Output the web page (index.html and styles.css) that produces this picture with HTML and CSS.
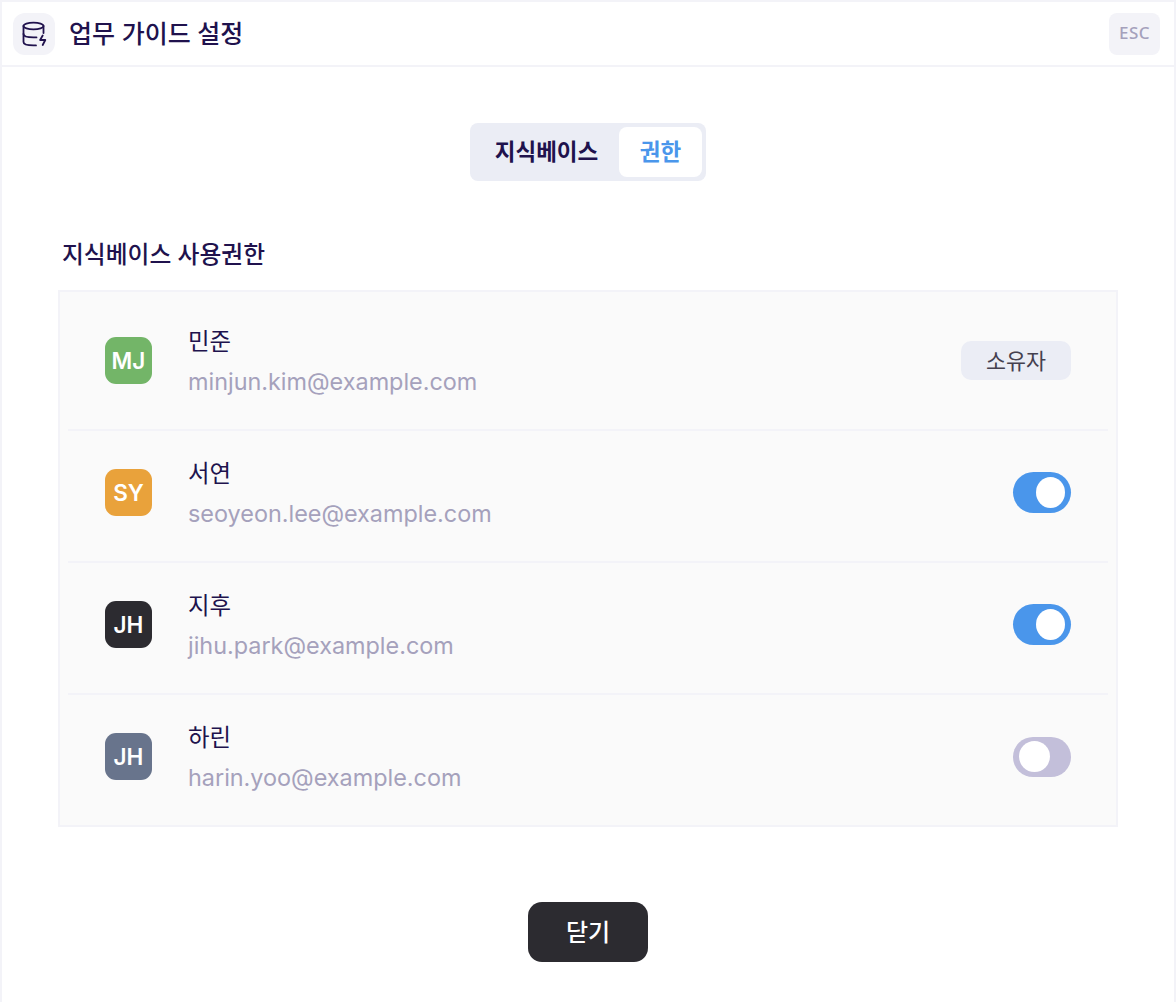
FILE: index.html
```html
<!DOCTYPE html>
<html lang="ko">
<head>
    <meta charset="UTF-8">
    <meta name="viewport" content="width=device-width, initial-scale=1.0">
    <title>업무 가이드 설정</title>
    <link rel="stylesheet" href="styles.css">
</head>
<body>
    <div class="modal">
        <header class="modal-header">
            <div class="header-left">
                <div class="header-icon">
                    <svg width="26" height="26" viewBox="-0.7 0 26 26" fill="none" stroke="#20124d" stroke-width="1.8" stroke-linecap="round" stroke-linejoin="round">
                        <ellipse cx="11.8" cy="5" rx="10" ry="3.4"/>
                        <path d="M1.8 5v16c0 2 4 3.4 10 3.4h2.5"/>
                        <path d="M21.8 5v7"/>
                        <path d="M1.8 13c0 2 4 3.4 10 3.4h3"/>
                        <path d="M21 14.5l-2.6 4.5h5.2l-2.6 5"/>
                    </svg>
                </div>
                <h1 class="modal-title">업무 가이드 설정</h1>
            </div>
            <button class="esc-btn">ESC</button>
        </header>

        <div class="modal-body">
            <div class="tabs">
                <button class="tab">지식베이스</button>
                <button class="tab active">권한</button>
            </div>

            <h2 class="section-title">지식베이스 사용권한</h2>

            <div class="user-list">
                <div class="user-row">
                    <div class="avatar avatar-green">MJ</div>
                    <div class="user-info">
                        <div class="user-name">민준</div>
                        <div class="user-email">minjun.kim@example.com</div>
                    </div>
                    <div class="owner-badge">소유자</div>
                </div>
                <div class="user-row">
                    <div class="avatar avatar-orange">SY</div>
                    <div class="user-info">
                        <div class="user-name">서연</div>
                        <div class="user-email">seoyeon.lee@example.com</div>
                    </div>
                    <div class="toggle on"><span class="knob"></span></div>
                </div>
                <div class="user-row">
                    <div class="avatar avatar-dark">JH</div>
                    <div class="user-info">
                        <div class="user-name">지후</div>
                        <div class="user-email">jihu.park@example.com</div>
                    </div>
                    <div class="toggle on"><span class="knob"></span></div>
                </div>
                <div class="user-row">
                    <div class="avatar avatar-slate">JH</div>
                    <div class="user-info">
                        <div class="user-name">하린</div>
                        <div class="user-email">harin.yoo@example.com</div>
                    </div>
                    <div class="toggle"><span class="knob"></span></div>
                </div>
            </div>

            <div class="modal-footer">
                <button class="close-btn">닫기</button>
            </div>
        </div>
    </div>
</body>
</html>
```
FILE: styles.css
```css
* {
    box-sizing: border-box;
}

body {
    font-family: Inter, "Noto Sans CJK KR", sans-serif;
    background: #fff;
    color: #20124d;
    margin: 0;
    padding: 0;
}

button {
    font-family: inherit;
    border: none;
    cursor: pointer;
}

.modal {
    height: 1002px;
    border: 2px solid #f3f3f8;
    border-bottom: none;
    background: #fff;
}

.modal-header {
    height: 65px;
    display: flex;
    align-items: center;
    justify-content: space-between;
    padding: 0 14px 0 11px;
    border-bottom: 2px solid #f3f3f8;
}

.header-left {
    display: flex;
    align-items: center;
    gap: 14px;
}

.header-icon {
    width: 42px;
    height: 42px;
    border-radius: 12px;
    background: #f3f3f8;
    display: flex;
    align-items: center;
    justify-content: center;
}

.modal-title {
    margin: 0 0 4px;
    font-size: 25px;
    font-weight: 500;
}

.esc-btn {
    width: 51px;
    height: 42px;
    border-radius: 8px;
    background: #f3f3f8;
    color: #a5a1bc;
    font-family: "Noto Sans", sans-serif;
    font-size: 17px;
    font-weight: 500;
    letter-spacing: 0.4px;
    padding: 0 0 2px;
}

.modal-body {
    padding: 56px 56px 0;
}

.tabs {
    display: flex;
    width: 236px;
    height: 58px;
    margin: 0 auto;
    padding: 4px;
    background: #ebedf5;
    border-radius: 8px;
}

.tab {
    width: 145px;
    background: transparent;
    color: #20124d;
    font-size: 22.5px;
    font-weight: 700;
    border-radius: 8px;
    padding: 0 0 4px;
}

.tab.active {
    width: 83px;
    background: #fff;
    color: #4a96eb;
}

.section-title {
    margin: 58px 0 19px 4px;
    font-size: 23.75px;
    line-height: 32px;
    font-weight: 500;
}

.user-list {
    background: #fafafa;
    border: 2px solid #f3f3f8;
    padding: 7px 8px 0;
}

.user-row {
    height: 132px;
    display: flex;
    align-items: center;
    padding: 0 37px 7px;
    border-bottom: 2px solid #f3f3f8;
}

.user-row:last-child {
    height: 130px;
    border-bottom: none;
}

.avatar {
    width: 47px;
    height: 47px;
    border-radius: 11px;
    color: #fff;
    font-size: 22.5px;
    font-weight: 600;
    display: flex;
    align-items: center;
    justify-content: center;
    flex-shrink: 0;
}

.avatar-green {
    background: #73b568;
}

.avatar-orange {
    background: #e9a23b;
}

.avatar-dark {
    background: #2c2b30;
}

.avatar-slate {
    background: #68748c;
}

.user-info {
    margin: 2px 0 0 36px;
    flex: 1;
}

.user-name {
    font-size: 23.4px;
    line-height: 32px;
    margin-bottom: 8px;
}

.user-email {
    font-size: 23.4px;
    line-height: 32px;
    color: #a5a1bc;
}

.owner-badge {
    width: 110px;
    height: 39px;
    border-radius: 10px;
    background: #ebedf5;
    color: #45414f;
    font-size: 21.75px;
    display: flex;
    align-items: center;
    justify-content: center;
    padding-bottom: 3px;
}

.toggle {
    width: 58px;
    height: 40px;
    border-radius: 20px;
    background: #c3bfda;
    display: flex;
    align-items: center;
    padding: 0 6px;
}

.toggle.on {
    height: 41px;
    border-radius: 21px;
    background: #4a96eb;
    justify-content: flex-end;
}

.knob {
    width: 31px;
    height: 31px;
    border-radius: 50%;
    background: #fff;
}

.toggle.on .knob {
    width: 29px;
}

.modal-footer {
    display: flex;
    justify-content: center;
    margin-top: 75px;
}

.close-btn {
    width: 120px;
    height: 60px;
    border-radius: 14px;
    background: #2c2b30;
    color: #fff;
    font-size: 24px;
    font-weight: 500;
    padding: 0 0 3px;
}
```
